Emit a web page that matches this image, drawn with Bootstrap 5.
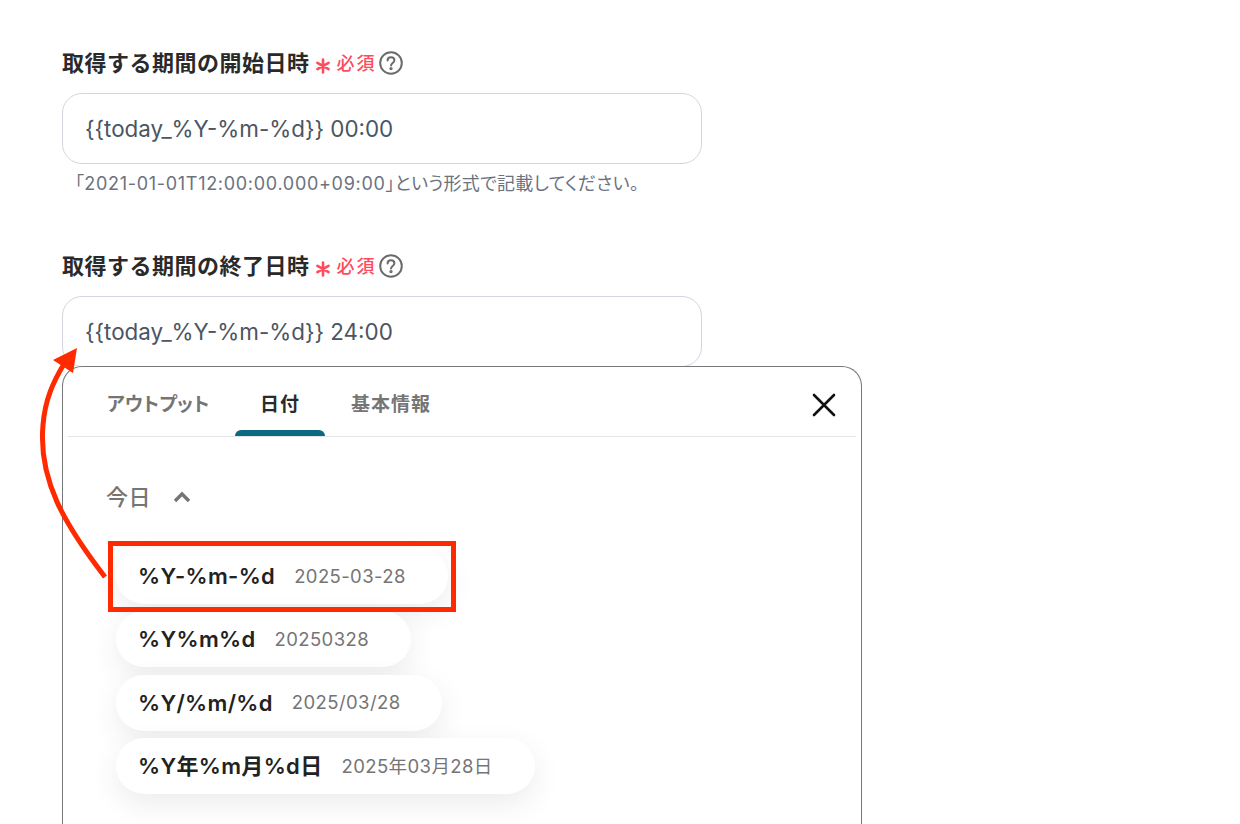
<!DOCTYPE html>
<html lang="ja">

<head>
    <meta charset="UTF-8">
    <meta name="viewport" content="width=device-width, initial-scale=1.0">
    <title>日付の設定</title>
    <link href="https://cdn.jsdelivr.net/npm/bootstrap@5.3.5/dist/css/bootstrap.min.css" rel="stylesheet">
    <style>
        html, body { height: 824px; overflow: hidden; }
        body { font-family: Inter, "Noto Sans CJK JP", sans-serif; background: #fff; color: #222; position: relative; }
        .page-wrap { width: 800px; margin-left: 62px; padding-top: 48px; }
        .field-label { font-size: 22px; font-weight: 600; line-height: 30px; letter-spacing: .5px; color: #2a2a2a; margin: 0; }
        .req-icon { margin-left: 5px; margin-top: 5px; }
        .req-text { font-size: 18px; font-weight: 500; color: #ff4b5c; line-height: 28px; font-feature-settings: "palt"; letter-spacing: 2px; margin-left: 6px; margin-top: 2px; }
        .help-icon { margin-left: 2px; }
        .form-control.date-input { width: 640px; height: 71px; margin-top: 15px; border: 1px solid #d3d6de; border-radius: 20px; padding: 0 22px; font-size: 22.4px; color: #4b5563; box-shadow: none; }
        .help-text { font-size: 18px; line-height: 24px; color: #6b7280; font-feature-settings: "palt"; letter-spacing: .3px; margin-top: 8px; margin-bottom: 0; padding-left: 13px; }
        .help-num { letter-spacing: .7px; }
        .second-field { margin-top: 55px; }
        .picker-panel { height: 459px; border: 1px solid #77787a; border-bottom: 0; border-radius: 20px 20px 0 0; padding: 0 5px; margin-top: -1px; position: relative; }
        .picker-tabs { height: 70px; border-bottom: 1px solid #e4e5e8; padding-left: 24px; }
        .picker-tabs .nav-link { height: 70px; padding: 21px 0 0; text-align: center; font-size: 19px; line-height: 34px; font-weight: 600; color: #757575; font-feature-settings: "palt"; letter-spacing: 1px; border-radius: 0; position: relative; }
        .picker-tabs .tab-out { width: 111px; margin-left: 15px; margin-right: 17px; text-align: left; letter-spacing: .2px; }
        .picker-tabs .tab-date { width: 90px; color: #2a2a2a; margin-right: 26px; }
        .picker-tabs .tab-date::after { content: ""; position: absolute; left: 0; right: 0; bottom: 1px; height: 6px; background: #0b6983; border-radius: 6px 6px 0 0; }
        .close-x { position: absolute; right: 25px; top: 26px; padding: 0; border: 0; background: none; line-height: 0; }
        .today-row { margin-top: 42px; padding-left: 38px; font-size: 22px; line-height: 36px; font-weight: 500; letter-spacing: .5px; color: #757575; }
        .today-chevron { margin-left: 22px; }
        .pill-list { margin-top: 33px; padding-left: 48px; gap: 7.4px; }
        .fmt-pill { height: 56px; padding: 1px 42px 0 22px; border-radius: 28px; background: #fff; box-shadow: 0 10px 30px rgba(0, 0, 0, .08); gap: 19px; }
        .fmt-name { font-size: 22px; font-weight: 600; color: #222; letter-spacing: .33px; }
        .fmt-val { font-size: 18.5px; color: #757575; letter-spacing: .4px; }
        .mark-box { position: absolute; left: 108px; top: 541px; width: 348px; height: 71px; border: 5px solid #ff2a00; pointer-events: none; }
        .mark-arrow { position: absolute; left: 0; top: 0; pointer-events: none; }
    </style>
</head>

<body>
    <div class="page-wrap">
        <div class="d-flex align-items-center">
            <h2 class="field-label">取得する期間の開始日時</h2>
            <svg class="req-icon" width="16" height="16" viewBox="0 0 16 16" stroke="#ff4b5c" stroke-width="2.6" stroke-linecap="round"><path d="M8 1.5v13M2.4 4.8l11.2 6.4M13.6 4.8L2.4 11.2"/></svg>
            <span class="req-text">必須</span>
            <svg class="help-icon" width="24" height="24" viewBox="0 0 24 24" fill="none" stroke="#6b6b6b" stroke-width="2"><circle cx="12" cy="12" r="10.8"/><path d="M8.6 9.4c0-2 1.5-3.2 3.4-3.2s3.4 1.2 3.4 3c0 2.6-3.4 2.8-3.4 5.4" stroke-linecap="round"/><circle cx="12" cy="17.6" r=".7" fill="#6b6b6b"/></svg>
        </div>
        <input type="text" class="form-control date-input" value="{{today_%Y-%m-%d}} 00:00" readonly>
        <p class="help-text">「<span class="help-num">2021-01-01T12:00:00.000+09:00</span>」という形式で記載してください。</p>

        <div class="second-field">
            <div class="d-flex align-items-center">
                <h2 class="field-label">取得する期間の終了日時</h2>
                <svg class="req-icon" width="16" height="16" viewBox="0 0 16 16" stroke="#ff4b5c" stroke-width="2.6" stroke-linecap="round"><path d="M8 1.5v13M2.4 4.8l11.2 6.4M13.6 4.8L2.4 11.2"/></svg>
                <span class="req-text">必須</span>
                <svg class="help-icon" width="24" height="24" viewBox="0 0 24 24" fill="none" stroke="#6b6b6b" stroke-width="2"><circle cx="12" cy="12" r="10.8"/><path d="M8.6 9.4c0-2 1.5-3.2 3.4-3.2s3.4 1.2 3.4 3c0 2.6-3.4 2.8-3.4 5.4" stroke-linecap="round"/><circle cx="12" cy="17.6" r=".7" fill="#6b6b6b"/></svg>
            </div>
            <input type="text" class="form-control date-input" value="{{today_%Y-%m-%d}} 24:00" readonly>
        </div>

        <div class="picker-panel">
            <nav class="nav picker-tabs">
                <a class="nav-link tab-out" href="#">アウトプット</a>
                <a class="nav-link tab-date" href="#">日付</a>
                <a class="nav-link" href="#">基本情報</a>
            </nav>
            <button class="close-x" type="button" aria-label="Close">
                <svg width="24" height="24" viewBox="0 0 24 24" stroke="#111" stroke-width="2.6" stroke-linecap="round"><path d="M2 2l20 20M22 2L2 22"/></svg>
            </button>
            <div class="today-row d-flex align-items-center">
                <span>今日</span>
                <svg class="today-chevron" width="18" height="12" viewBox="0 0 18 12" fill="none" stroke="#757575" stroke-width="3.4"><path d="M2 10l7-7 7 7"/></svg>
            </div>
            <div class="pill-list d-flex flex-column align-items-start">
                <div class="fmt-pill d-inline-flex align-items-center"><span class="fmt-name">%Y-%m-%d</span><span class="fmt-val">2025-03-28</span></div>
                <div class="fmt-pill d-inline-flex align-items-center"><span class="fmt-name">%Y%m%d</span><span class="fmt-val">20250328</span></div>
                <div class="fmt-pill d-inline-flex align-items-center"><span class="fmt-name">%Y/%m/%d</span><span class="fmt-val">2025/03/28</span></div>
                <div class="fmt-pill d-inline-flex align-items-center"><span class="fmt-name">%Y年%m月%d日</span><span class="fmt-val">2025年03月28日</span></div>
            </div>
        </div>
    </div>

    <!-- annotation drawn over the screen -->
    <div class="mark-box"></div>
    <svg class="mark-arrow" width="200" height="620" viewBox="0 0 200 620" fill="none">
        <path d="M105 577C65 525 38 480 43 425C45 400 53 382 64 364" stroke="#ff2a00" stroke-width="5"/>
        <path d="M77 348L53 360L73 373Z" fill="#ff2a00"/>
    </svg>

    <script src="https://cdn.jsdelivr.net/npm/bootstrap@5.3.5/dist/js/bootstrap.bundle.min.js"></script>
</body>

</html>
